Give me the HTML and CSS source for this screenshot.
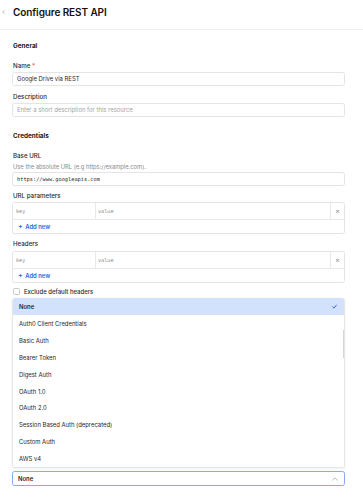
FILE: index.html
```html
<!DOCTYPE html>
<html>
<head>
<meta charset="utf-8">
<link rel="stylesheet" href="styles.css">
</head>
<body>
<header class="topbar">
  <span class="back">&#8249;</span>
  <h1 class="title">Configure REST API</h1>
</header>
<main class="content">
  <h2 class="section">General</h2>
  <label class="label mt10">Name <span class="req">*</span></label>
  <div class="input">Google Drive via REST</div>
  <label class="label mt6">Description</label>
  <div class="input placeholder">Enter a short description for this resource</div>

  <h2 class="section mt14">Credentials</h2>
  <label class="label mt10">Base URL</label>
  <div class="help">Use the absolute URL (e.g https://example.com).</div>
  <div class="input mono tight">https://www.googleapis.com</div>

  <label class="label mt5">URL parameters</label>
  <div class="kv kv-first">
    <div class="kv-row">
      <div class="kv-key">key</div>
      <div class="kv-val">value</div>
      <div class="kv-del">&#215;</div>
    </div>
    <div class="kv-add"><span class="plus">+</span> Add new</div>
  </div>

  <label class="label mt5">Headers</label>
  <div class="kv kv-second">
    <div class="kv-row">
      <div class="kv-key">key</div>
      <div class="kv-val">value</div>
      <div class="kv-del">&#215;</div>
    </div>
    <div class="kv-add"><span class="plus">+</span> Add new</div>
  </div>

  <div class="check-row">
    <span class="checkbox"></span>
    <span class="check-label">Exclude default headers</span>
  </div>

  <div class="under"></div>

  <div class="select-wrap">
    <ul class="menu">
      <li class="opt active">None
        <svg class="tick" viewBox="0 0 10 10" width="5" height="5"><path d="M1.2 5.6 L3.9 8.2 L8.9 2" fill="none" stroke="#2563eb" stroke-width="1.9" stroke-linecap="round" stroke-linejoin="round"/></svg>
      </li>
      <li class="opt">Auth0 Client Credentials</li>
      <li class="opt">Basic Auth</li>
      <li class="opt">Bearer Token</li>
      <li class="opt">Digest Auth</li>
      <li class="opt">OAuth 1.0</li>
      <li class="opt">OAuth 2.0</li>
      <li class="opt">Session Based Auth (deprecated)</li>
      <li class="opt">Custom Auth</li>
      <li class="opt">AWS v4</li>
      <span class="thumb"></span>
    </ul>
    <div class="select">
      <span class="select-val">None</span>
      <svg class="caret" viewBox="0 0 10 6" width="6" height="4"><path d="M1 5 L5 1 L9 5" fill="none" stroke="#9a9a9a" stroke-width="1.2" stroke-linecap="round" stroke-linejoin="round"/></svg>
    </div>
  </div>
</main>
</body>
</html>
```
FILE: styles.css
```css
* { box-sizing: border-box; }
html, body { margin: 0; padding: 0; background: #fff; }
body {
  font-family: Inter, "Noto Sans", sans-serif;
  color: #1c1c1c;
  width: 363px;
  height: 500px;
  overflow: hidden;
}
.topbar {
  height: 30px;
  border-bottom: 1px solid #f1f1f1;
  display: flex;
  align-items: flex-start;
  padding-top: 5px;
}
.back {
  width: 13px;
  padding-left: 2px;
  font-size: 8px;
  line-height: 12px;
  color: #b5b5b5;
}
.title {
  margin: 0;
  font-size: 10px;
  line-height: 14px;
  font-weight: 600;
  letter-spacing: -0.1px;
  color: #111;
}
.content {
  padding: 0 18px 0 12px;
  display: flex;
  flex-direction: column;
}
.section {
  margin: 11px 0 0 1px;
  font-size: 6.4px;
  line-height: 10px;
  font-weight: 700;
  color: #1a1a1a;
}
.label {
  display: block;
  margin-left: 1px;
  font-size: 6.2px;
  line-height: 9px;
  font-weight: 500;
  color: #2a2a2a;
}
.req { color: #e5484d; }
.input {
  margin-top: 2px;
  height: 14px;
  border: 1px solid #e4e4e4;
  border-radius: 2.5px;
  padding: 0 4px;
  font-size: 5.9px;
  line-height: 12px;
  color: #1f1f1f;
}
.input.tight { margin-top: 1px; }
.mt5 { margin-top: 5px; }
.mt6 { margin-top: 6px; }
.mt10 { margin-top: 10px; }
.section.mt14 { margin-top: 14px; }
.placeholder { color: #a3a3a3; }
.mono {
  font-family: "DejaVu Sans Mono", "Liberation Mono", monospace;
  font-size: 5.3px;
}
.help {
  margin: 2px 0 0 1px;
  font-size: 5.8px;
  line-height: 9px;
  color: #8a8a8a;
}
.kv {
  border: 1px solid #e4e4e4;
  border-radius: 2.5px;
}
.kv-first { margin-top: 2px; }
.kv-second { margin-top: 3px; }
.kv-row {
  display: flex;
  height: 17px;
  border-bottom: 1px solid #e8e8e8;
}
.kv-key, .kv-val {
  font-family: "DejaVu Sans Mono", "Liberation Mono", monospace;
  font-size: 5.2px;
  line-height: 16px;
  color: #8c8c8c;
  padding-left: 3px;
}
.kv-key { width: 83px; border-right: 1px solid #e8e8e8; }
.kv-val { flex: 1; padding-left: 2px; border-right: 1px solid #e8e8e8; }
.kv-del {
  width: 13px;
  text-align: center;
  font-size: 7px;
  line-height: 16px;
  color: #8a8a8a;
}
.kv-add {
  height: 13px;
  padding-left: 5px;
  font-size: 5.9px;
  line-height: 13px;
  font-weight: 600;
  color: #2f66dc;
}
.plus { font-size: 7px; font-weight: 600; margin-right: 1px; }
.check-row {
  margin-top: 4px;
  display: flex;
  align-items: center;
  height: 9px;
}
.checkbox {
  width: 7px;
  height: 7px;
  margin-left: 1px;
  border: 1px solid #c9c9c9;
  border-radius: 1.5px;
}
.check-label {
  margin-left: 4px;
  font-size: 6px;
  font-weight: 500;
  color: #2a2a2a;
}
.under {
  height: 165px;
}
.select-wrap {
  position: relative;
  margin-top: 10px;
}
.menu {
  position: absolute;
  left: 0;
  right: 0;
  bottom: calc(100% + 3px);
  height: 170px;
  margin: 0;
  padding: 0;
  list-style: none;
  background: #fff;
  border: 1px solid #e6e6e6;
  border-top: none;
  border-radius: 3px 3px 2px 2px;
  box-shadow: 0 1px 3px rgba(0,0,0,0.06);
  overflow: hidden;
}
.opt {
  height: 16.9px;
  padding-left: 6px;
  display: flex;
  align-items: center;
  font-size: 5.9px;
  color: #262626;
}
.opt.active {
  background: #d2e1fc;
  font-weight: 600;
  justify-content: space-between;
  padding-right: 7px;
  height: 17px;
}
.tick { display: block; }
.thumb {
  position: absolute;
  right: 0;
  top: 32px;
  width: 1.5px;
  height: 28px;
  background: #d4d4d4;
}
.select {
  height: 15px;
  border: 1.5px solid #86a9f3;
  border-radius: 2.5px;
  display: flex;
  align-items: center;
  justify-content: space-between;
  padding: 0 6px 0 5px;
}
.select-val {
  font-size: 5.9px;
  font-weight: 600;
  color: #1c1c1c;
}
.caret { display: block; }
```
